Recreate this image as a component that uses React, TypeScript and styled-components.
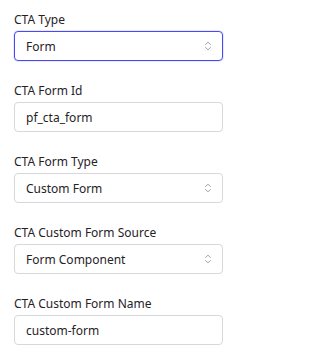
import React from 'react';
import styled, { createGlobalStyle } from 'styled-components';

const GlobalStyle = createGlobalStyle`
  html, body {
    margin: 0;
    padding: 0;
    background: #ffffff;
  }
  body {
    font-family: "Noto Sans", "Open Sans", sans-serif;
    color: #1f2328;
  }
`;

const Form = styled.div`
  display: flex;
  flex-direction: column;
  gap: 22px;
  padding: 12px 8px 0 14px;
  width: 209px;
`;

const Field = styled.div`
  display: flex;
  flex-direction: column;
`;

const Label = styled.div`
  font-size: 12px;
  line-height: 16px;
  margin-bottom: 3px;
  color: #1f2328;
`;

const Box = styled.div<{ $focused?: boolean }>`
  box-sizing: border-box;
  height: 30px;
  display: flex;
  align-items: center;
  justify-content: space-between;
  padding: 0 10px 0 11px;
  border: 1px solid ${(p) => (p.$focused ? '#4a4af4' : '#d6d8dc')};
  border-radius: 4px;
  box-shadow: ${(p) => (p.$focused ? '0 0 0 1px rgba(74, 74, 244, 0.12)' : 'none')};
  font-size: 12px;
  color: #1f2328;
  background: #ffffff;
`;

const Chevron = () => (
  <svg width="8" height="10" viewBox="0 0 8 10" fill="none">
    <polyline points="1.5,3.5 4,1.2 6.5,3.5" stroke="#a3a6ab" strokeWidth="1" strokeLinecap="round" strokeLinejoin="round" />
    <polyline points="1.5,6.5 4,8.8 6.5,6.5" stroke="#a3a6ab" strokeWidth="1" strokeLinecap="round" strokeLinejoin="round" />
  </svg>
);

type FieldDef = { label: string; value: string; select?: boolean; focused?: boolean };

const fields: FieldDef[] = [
  { label: 'CTA Type', value: 'Form', select: true, focused: true },
  { label: 'CTA Form Id', value: 'pf_cta_form' },
  { label: 'CTA Form Type', value: 'Custom Form', select: true },
  { label: 'CTA Custom Form Source', value: 'Form Component', select: true },
  { label: 'CTA Custom Form Name', value: 'custom-form' },
];

export default function App() {
  return (
    <>
      <GlobalStyle />
      <Form>
        {fields.map((f) => (
          <Field key={f.label}>
            <Label>{f.label}</Label>
            <Box $focused={f.focused}>
              <span>{f.value}</span>
              {f.select && <Chevron />}
            </Box>
          </Field>
        ))}
      </Form>
    </>
  );
}
